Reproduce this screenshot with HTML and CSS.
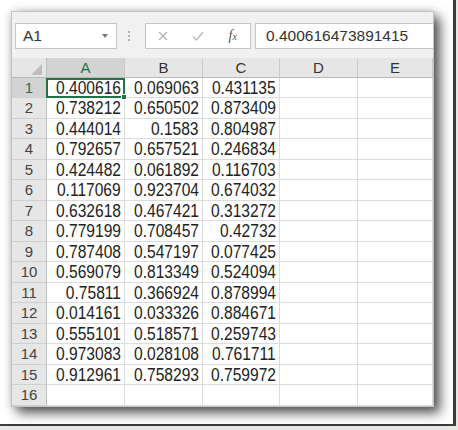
FILE: index.html
```html
<!DOCTYPE html>
<html lang="en">
<head>
    <meta charset="UTF-8">
    <title>Sheet1</title>
    <link rel="stylesheet" href="styles.css">
</head>
<body>

    <div class="frame">
        <div class="window">

            <div class="formula-bar">
                <div class="name-box">
                    <span>A1</span>
                    <span class="caret"></span>
                </div>
                <div class="grip"><i></i><i></i><i></i></div>
                <div class="fx-box">
                    <svg class="icon" width="10" height="10" viewBox="0 0 10 10">
                        <path d="M1 1 L9 9 M9 1 L1 9" stroke="#b4b4b4" stroke-width="1.2" fill="none"/>
                    </svg>
                    <svg class="icon" width="12" height="10" viewBox="0 0 12 10">
                        <path d="M1 5.5 L4.5 9 L11 1" stroke="#b4b4b4" stroke-width="1.2" fill="none"/>
                    </svg>
                    <span class="fx"><i>f</i><span>x</span></span>
                </div>
                <div class="formula-input">0.400616473891415</div>
            </div>

            <div class="sheet">
                <div class="row">
                    <div class="corner"><span class="tri"></span></div>
                    <div class="col-head sel">A</div>
                    <div class="col-head">B</div>
                    <div class="col-head">C</div>
                    <div class="col-head">D</div>
                    <div class="col-head">E</div>
                </div>
                <div class="row">
                    <div class="row-head sel">1</div>
                    <div class="cell active"><span>0.400616</span></div>
                    <div class="cell"><span>0.069063</span></div>
                    <div class="cell"><span>0.431135</span></div>
                    <div class="cell"></div>
                    <div class="cell"></div>
                </div>
                <div class="row">
                    <div class="row-head">2</div>
                    <div class="cell"><span>0.738212</span></div>
                    <div class="cell"><span>0.650502</span></div>
                    <div class="cell"><span>0.873409</span></div>
                    <div class="cell"></div>
                    <div class="cell"></div>
                </div>
                <div class="row">
                    <div class="row-head">3</div>
                    <div class="cell"><span>0.444014</span></div>
                    <div class="cell"><span>0.1583</span></div>
                    <div class="cell"><span>0.804987</span></div>
                    <div class="cell"></div>
                    <div class="cell"></div>
                </div>
                <div class="row">
                    <div class="row-head">4</div>
                    <div class="cell"><span>0.792657</span></div>
                    <div class="cell"><span>0.657521</span></div>
                    <div class="cell"><span>0.246834</span></div>
                    <div class="cell"></div>
                    <div class="cell"></div>
                </div>
                <div class="row">
                    <div class="row-head">5</div>
                    <div class="cell"><span>0.424482</span></div>
                    <div class="cell"><span>0.061892</span></div>
                    <div class="cell"><span>0.116703</span></div>
                    <div class="cell"></div>
                    <div class="cell"></div>
                </div>
                <div class="row">
                    <div class="row-head">6</div>
                    <div class="cell"><span>0.117069</span></div>
                    <div class="cell"><span>0.923704</span></div>
                    <div class="cell"><span>0.674032</span></div>
                    <div class="cell"></div>
                    <div class="cell"></div>
                </div>
                <div class="row">
                    <div class="row-head">7</div>
                    <div class="cell"><span>0.632618</span></div>
                    <div class="cell"><span>0.467421</span></div>
                    <div class="cell"><span>0.313272</span></div>
                    <div class="cell"></div>
                    <div class="cell"></div>
                </div>
                <div class="row">
                    <div class="row-head">8</div>
                    <div class="cell"><span>0.779199</span></div>
                    <div class="cell"><span>0.708457</span></div>
                    <div class="cell"><span>0.42732</span></div>
                    <div class="cell"></div>
                    <div class="cell"></div>
                </div>
                <div class="row">
                    <div class="row-head">9</div>
                    <div class="cell"><span>0.787408</span></div>
                    <div class="cell"><span>0.547197</span></div>
                    <div class="cell"><span>0.077425</span></div>
                    <div class="cell"></div>
                    <div class="cell"></div>
                </div>
                <div class="row">
                    <div class="row-head">10</div>
                    <div class="cell"><span>0.569079</span></div>
                    <div class="cell"><span>0.813349</span></div>
                    <div class="cell"><span>0.524094</span></div>
                    <div class="cell"></div>
                    <div class="cell"></div>
                </div>
                <div class="row">
                    <div class="row-head">11</div>
                    <div class="cell"><span>0.75811</span></div>
                    <div class="cell"><span>0.366924</span></div>
                    <div class="cell"><span>0.878994</span></div>
                    <div class="cell"></div>
                    <div class="cell"></div>
                </div>
                <div class="row">
                    <div class="row-head">12</div>
                    <div class="cell"><span>0.014161</span></div>
                    <div class="cell"><span>0.033326</span></div>
                    <div class="cell"><span>0.884671</span></div>
                    <div class="cell"></div>
                    <div class="cell"></div>
                </div>
                <div class="row">
                    <div class="row-head">13</div>
                    <div class="cell"><span>0.555101</span></div>
                    <div class="cell"><span>0.518571</span></div>
                    <div class="cell"><span>0.259743</span></div>
                    <div class="cell"></div>
                    <div class="cell"></div>
                </div>
                <div class="row">
                    <div class="row-head">14</div>
                    <div class="cell"><span>0.973083</span></div>
                    <div class="cell"><span>0.028108</span></div>
                    <div class="cell"><span>0.761711</span></div>
                    <div class="cell"></div>
                    <div class="cell"></div>
                </div>
                <div class="row">
                    <div class="row-head">15</div>
                    <div class="cell"><span>0.912961</span></div>
                    <div class="cell"><span>0.758293</span></div>
                    <div class="cell"><span>0.759972</span></div>
                    <div class="cell"></div>
                    <div class="cell"></div>
                </div>
                <div class="row">
                    <div class="row-head">16</div>
                    <div class="cell"></div>
                    <div class="cell"></div>
                    <div class="cell"></div>
                    <div class="cell"></div>
                    <div class="cell"></div>
                </div>
            </div>

        </div>
    </div>

</body>
</html>
```

FILE: styles.css
```css
html, body {
    margin: 0;
    padding: 0;
}

body {
    background: #e9e9e3;
    font-family: "Liberation Sans", sans-serif;
}

.frame {
    width: 456px;
    height: 426px;
    box-sizing: border-box;
    padding: 11px 0 0 11px;
    background: #fff;
    border-right: 3px solid #3c3c3c;
    border-bottom: 2px solid #3c3c3c;
}

.window {
    width: 423px;
    box-sizing: border-box;
    border: 1px solid #c4c4c4;
    background: #f1f1f1;
    box-shadow: 0 0 8px rgba(0, 0, 0, 0.18), 6px 6px 11px rgba(0, 0, 0, 0.65);
}

/* formula bar */

.formula-bar {
    display: flex;
    height: 46px;
    box-sizing: border-box;
    padding: 11px 0 9px 3px;
}

.name-box {
    width: 102px;
    box-sizing: border-box;
    display: flex;
    align-items: center;
    justify-content: space-between;
    padding: 0 8px 0 7px;
    background: #fff;
    border: 1px solid #c6c6c6;
    font-size: 15.5px;
    color: #333;
}

.caret {
    width: 0;
    height: 0;
    border-left: 3.5px solid transparent;
    border-right: 3.5px solid transparent;
    border-top: 4px solid #777;
}

.grip {
    width: 24px;
    margin-right: 4px;
    display: flex;
    flex-direction: column;
    align-items: center;
    justify-content: center;
    gap: 2px;
}

.grip i {
    width: 2px;
    height: 2px;
    background: #b3b3b3;
}

.fx-box {
    width: 106px;
    box-sizing: border-box;
    display: grid;
    grid-template-columns: repeat(3, 1fr);
    align-items: center;
    justify-items: center;
    background: #fff;
    border: 1px solid #c6c6c6;
}

.fx {
    font-family: "Liberation Serif", serif;
    color: #555;
    font-size: 14px;
}

.fx span {
    font-size: 10px;
    font-style: italic;
}

.formula-input {
    flex: 1;
    margin-left: 4px;
    padding-left: 10px;
    display: flex;
    align-items: center;
    background: #fff;
    border: 1px solid #c6c6c6;
    border-right: 0;
    font-size: 15.5px;
    color: #333;
}

/* grid */

.row {
    display: grid;
    grid-template-columns: 35px 78px 78px 77px 78px 1fr;
    grid-template-rows: 100%;
    height: 20px;
}

.row:nth-child(odd) {
    height: 21px;
}

.row:first-child {
    height: 20px;
}

.corner {
    display: flex;
    justify-content: flex-end;
    align-items: flex-end;
    padding: 0 4px 2px 0;
    background: #e6e6e6;
    border-right: 1px solid #bdbdbd;
    border-bottom: 1px solid #b8b8b8;
}

.tri {
    width: 0;
    height: 0;
    border-left: 11px solid transparent;
    border-bottom: 11px solid #bdbdbd;
}

.col-head {
    background: #e6e6e6;
    border-right: 1px solid #cacaca;
    border-bottom: 1px solid #b8b8b8;
    padding-top: 1px;
    text-align: center;
    font-size: 15px;
    line-height: 18px;
    color: #333;
}

.row-head {
    background: #e6e6e6;
    border-right: 1px solid #bdbdbd;
    border-bottom: 1px solid #cfcfcf;
    padding-top: 1px;
    text-align: center;
    font-size: 15px;
    line-height: 18px;
    color: #444;
}

.col-head.sel,
.row-head.sel {
    background: #d3d3d3;
    color: #217346;
}

.cell {
    background: #fff;
    border-right: 1px solid #dcdcdc;
    border-bottom: 1px solid #dcdcdc;
    padding: 2px 3px 0 0;
    text-align: right;
    white-space: nowrap;
    font-size: 17.5px;
    line-height: 17px;
    color: #222;
}

/* Calibri-like narrow figures */
.cell span {
    display: inline-block;
    transform: scaleX(0.89);
    transform-origin: right;
}

.cell.active {
    position: relative;
}

.cell.active::after {
    content: "";
    position: absolute;
    left: -1px;
    top: 0;
    right: -1px;
    bottom: -1px;
    border: 2px solid #217346;
}

.cell.active::before {
    content: "";
    position: absolute;
    right: -3px;
    bottom: -3px;
    width: 6px;
    height: 6px;
    box-sizing: border-box;
    border: 1px solid #fff;
    background: #217346;
    z-index: 2;
}
```
